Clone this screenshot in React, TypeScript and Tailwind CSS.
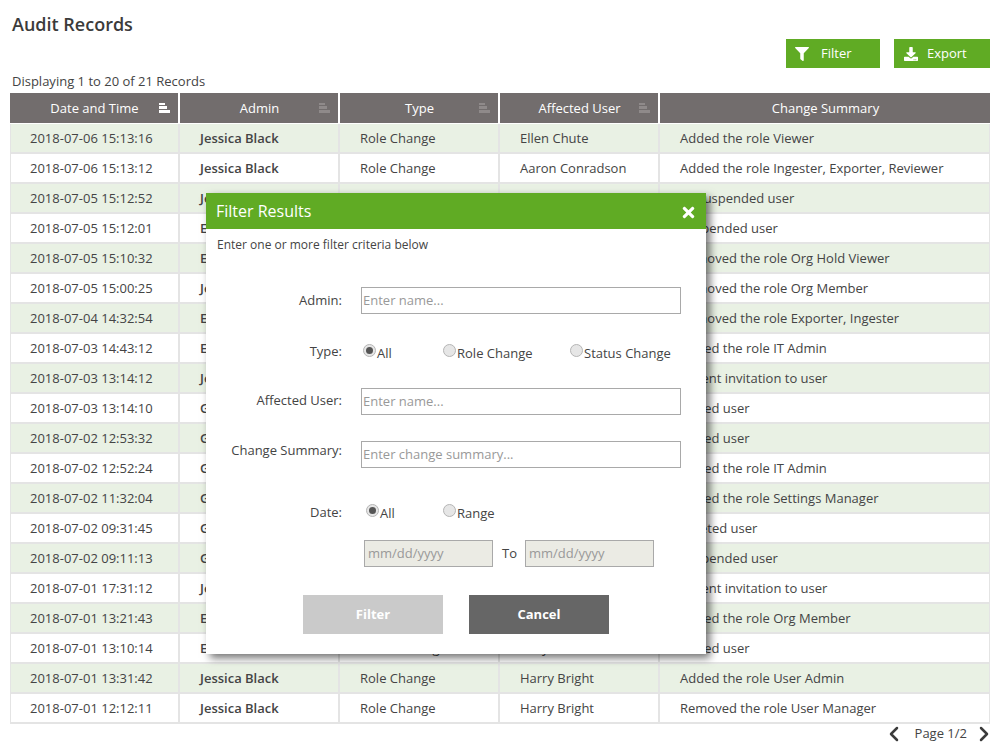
import { ChevronLeft, ChevronRight } from 'lucide-react'
import { FaDownload, FaFilter, FaTimes } from 'react-icons/fa'

const ROWS = [
  ['2018-07-06 15:13:16', 'Jessica Black', 'Role Change', 'Ellen Chute', 'Added the role Viewer'],
  ['2018-07-06 15:13:12', 'Jessica Black', 'Role Change', 'Aaron Conradson', 'Added the role Ingester, Exporter, Reviewer'],
  ['2018-07-05 15:12:52', 'Jessica Black', 'Status Change', 'Ellen Chute', 'Unsuspended user'],
  ['2018-07-05 15:12:01', 'Ellen Chute', 'Status Change', 'Aaron Conradson', 'Suspended user'],
  ['2018-07-05 15:10:32', 'Ellen Chute', 'Role Change', 'Aaron Conradson', 'Removed the role Org Hold Viewer'],
  ['2018-07-05 15:00:25', 'Jessica Black', 'Role Change', 'Ellen Chute', 'Removed the role Org Member'],
  ['2018-07-04 14:32:54', 'Ellen Chute', 'Role Change', 'Harry Bright', 'Removed the role Exporter, Ingester'],
  ['2018-07-03 14:43:12', 'Ellen Chute', 'Role Change', 'Harry Bright', 'Added the role IT Admin'],
  ['2018-07-03 13:14:12', 'Jessica Black', 'Status Change', 'Harry Bright', 'Resent invitation to user'],
  ['2018-07-03 13:14:10', 'Gary Hill', 'Status Change', 'Harry Bright', 'Added user'],
  ['2018-07-02 12:53:32', 'Gary Hill', 'Status Change', 'Ellen Chute', 'Added user'],
  ['2018-07-02 12:52:24', 'Gary Hill', 'Role Change', 'Ellen Chute', 'Added the role IT Admin'],
  ['2018-07-02 11:32:04', 'Gary Hill', 'Role Change', 'Ellen Chute', 'Added the role Settings Manager'],
  ['2018-07-02 09:31:45', 'Gary Hill', 'Status Change', 'Ellen Chute', 'Deleted user'],
  ['2018-07-02 09:11:13', 'Gary Hill', 'Status Change', 'Ellen Chute', 'Suspended user'],
  ['2018-07-01 17:31:12', 'Jessica Black', 'Status Change', 'Gary Hill', 'Resent invitation to user'],
  ['2018-07-01 13:21:43', 'Ellen Chute', 'Role Change', 'Gary Hill', 'Added the role Org Member'],
  ['2018-07-01 13:10:14', 'Ellen Chute', 'Status Change', 'Gary Hill', 'Added user'],
  ['2018-07-01 13:31:42', 'Jessica Black', 'Role Change', 'Harry Bright', 'Added the role User Admin'],
  ['2018-07-01 12:12:11', 'Jessica Black', 'Role Change', 'Harry Bright', 'Removed the role User Manager'],
]

function SortIcon({ active }: { active?: boolean }) {
  return (
    <svg width="11" height="10" viewBox="0 0 11 10" className={active ? 'fill-white' : 'fill-[#8f8a8a]'}>
      <rect x="0" y="0" width="6" height="2" />
      <rect x="0" y="3" width="8" height="3" />
      <rect x="0" y="7" width="11" height="3" />
    </svg>
  )
}

function HeaderCell({ label, width, active, sort = true }: { label: string; width: string; active?: boolean; sort?: boolean }) {
  return (
    <div className={`relative flex h-full items-center justify-center border-r-2 border-white pl-[1px] pt-[2px] last:border-r-0 ${width}`}>
      <span>{label}</span>
      {sort && (
        <span className="absolute right-[8px] top-[10px] flex">
          <SortIcon active={active} />
        </span>
      )}
    </div>
  )
}

function Radio({ checked, label, className }: { checked?: boolean; label: string; className: string }) {
  return (
    <div className={`flex items-start ${className}`}>
      <span className="mt-[2px] flex h-[13px] w-[13px] items-center justify-center rounded-full border border-[#b5b5b5] bg-[#e6e6e6]">
        {checked && <span className="h-[7px] w-[7px] rounded-full bg-[#555]" />}
      </span>
      <span className="ml-[1px] mt-[2px] leading-[18px]">{label}</span>
    </div>
  )
}

function TextField({ placeholder }: { placeholder: string }) {
  return (
    <div className="flex h-[27px] w-[320px] items-center border border-[#a9a9a9] px-[1px] pt-[1px] text-[13px] text-[#999]">{placeholder}</div>
  )
}

function FieldRow({ label, labelClass = 'pt-[4px]', children }: { label: string; labelClass?: string; children: React.ReactNode }) {
  return (
    <div className="flex">
      <div className={`w-[136px] text-right leading-[18px] ${labelClass}`}>{label}</div>
      <div className="ml-[19px]">{children}</div>
    </div>
  )
}

function FilterModal() {
  return (
    <div className="absolute left-[206px] top-[193px] h-[461px] w-[500px] bg-white text-[13px] text-[#444] shadow-[4px_4px_8px_rgba(0,0,0,0.55)]">
      <div className="flex h-[36px] items-center justify-between bg-[#60ab24] pl-[10px] pr-[9px] text-white">
        <span className="text-[16px]">Filter Results</span>
        <FaTimes className="mt-[3px] text-[17px]" />
      </div>
      <div className="pl-[11px] pt-[7px] text-[12px] leading-[18px]">Enter one or more filter criteria below</div>
      <div className="mt-[33px]">
        <FieldRow label="Admin:">
          <TextField placeholder="Enter name..." />
        </FieldRow>
      </div>
      <div className="mt-[24px]">
        <FieldRow label="Type:">
          <div className="flex w-[320px] pt-[4px]">
            <Radio checked label="All" className="ml-[2px] w-[80px]" />
            <Radio label="Role Change" className="w-[127px]" />
            <Radio label="Status Change" className="" />
          </div>
        </FieldRow>
      </div>
      <div className="mt-[26px]">
        <FieldRow label="Affected User:" labelClass="pt-[3px]">
          <TextField placeholder="Enter name..." />
        </FieldRow>
      </div>
      <div className="mt-[26px]">
        <FieldRow label="Change Summary:" labelClass="pt-0">
          <TextField placeholder="Enter change summary..." />
        </FieldRow>
      </div>
      <div className="mt-[31px]">
        <FieldRow label="Date:">
          <div className="flex pt-[3px]">
            <Radio checked label="All" className="ml-[5px] w-[77px]" />
            <Radio label="Range" className="" />
          </div>
        </FieldRow>
      </div>
      <div className="mt-[18px] flex items-center pl-[158px]">
        <div className="flex h-[27px] w-[129px] items-center border border-[#a9a9a9] bg-[#ebebe4] px-[3px] text-[#999]">mm/dd/yyyy</div>
        <span className="ml-[9px] w-[23px]">To</span>
        <div className="flex h-[27px] w-[129px] items-center border border-[#a9a9a9] bg-[#ebebe4] px-[3px] text-[#999]">mm/dd/yyyy</div>
      </div>
      <div className="mt-[28px] flex pl-[97px] font-bold">
        <div className="flex h-[39px] w-[140px] items-center justify-center bg-[#cacaca] text-white">Filter</div>
        <div className="ml-[26px] flex h-[39px] w-[140px] items-center justify-center bg-[#666] text-white">Cancel</div>
      </div>
    </div>
  )
}

export default function App() {
  return (
    <div className="relative h-[755px] w-[1007px] overflow-hidden bg-white font-['Open_Sans',sans-serif] text-[13px] text-[#444]">
      <h1 className="pl-[12px] pt-[11px] text-[18px] font-semibold leading-[26px] text-[#3b3b3b]">Audit Records</h1>
      <div className="mt-[2px] flex justify-end gap-[14px] pr-[17px] text-white">
        <button className="flex h-[29px] w-[94px] items-center bg-[#60ab24] pl-[9px]">
          <FaFilter className="text-[14px]" />
          <span className="ml-[12px]">Filter</span>
        </button>
        <button className="flex h-[29px] w-[96px] items-center bg-[#60ab24] pl-[10px]">
          <FaDownload className="text-[14px]" />
          <span className="ml-[9px]">Export</span>
        </button>
      </div>
      <div className="pb-[2px] pl-[12px] pt-[3px] leading-[20px]">Displaying 1 to 20 of 21 Records</div>
      <div className="mx-[10px] w-[980px]">
        <div className="mb-[1px] flex h-[30px] bg-[#726d6d] text-white">
          <HeaderCell label="Date and Time" width="w-[170px]" active />
          <HeaderCell label="Admin" width="w-[160px]" />
          <HeaderCell label="Type" width="w-[160px]" />
          <HeaderCell label="Affected User" width="w-[160px]" />
          <HeaderCell label="Change Summary" width="flex-1" sort={false} />
        </div>
        {ROWS.map((row, i) => (
          <div key={row[0] + i} className={`flex h-[30px] border-x border-b-2 border-[#e4e4e4] ${i % 2 === 0 ? 'bg-[#e9f1e4]' : 'bg-white'}`}>
            <div className="flex w-[169px] items-center border-r-2 border-[#e4e4e4] pl-[19px] pt-[2px]">{row[0]}</div>
            <div className="flex w-[160px] items-center border-r-2 border-[#e4e4e4] pl-[20px] pt-[2px] font-semibold">{row[1]}</div>
            <div className="flex w-[160px] items-center border-r-2 border-[#e4e4e4] pl-[20px] pt-[2px]">{row[2]}</div>
            <div className="flex w-[160px] items-center border-r-2 border-[#e4e4e4] pl-[20px] pt-[2px]">{row[3]}</div>
            <div className="flex flex-1 items-center pl-[20px] pt-[2px]">{row[4]}</div>
          </div>
        ))}
      </div>
      <div className="-mt-[2px] flex items-center justify-end pr-[11px]">
        <ChevronLeft size={24} strokeWidth={2.5} className="text-[#3b3b3b]" />
        <span className="ml-[9px]">Page 1/2</span>
        <ChevronRight size={24} strokeWidth={2.5} className="ml-[5px] text-[#3b3b3b]" />
      </div>
      <FilterModal />
    </div>
  )
}
